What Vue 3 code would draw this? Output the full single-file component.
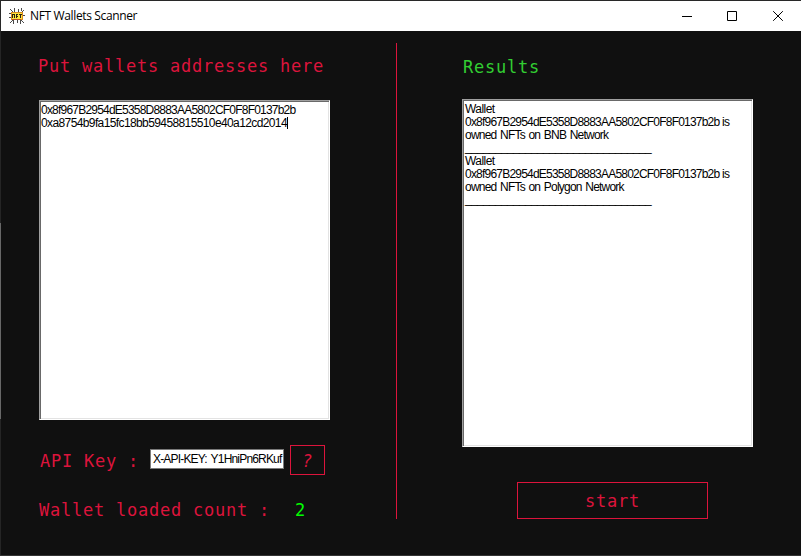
<script setup>
import { ref } from 'vue'

const wallets = ref([
  '0x8f967B2954dE5358D8883AA5802CF0F8F0137b2b',
  '0xa8754b9fa15fc18bb59458815510e40a12cd2014',
])
const separator = '_'.repeat(31)
const results = [
  { id: 1, network: 'owned NFTs on BNB Network' },
  { id: 2, network: 'owned NFTs on Polygon Network' },
]
const apiKey = 'X-API-KEY: Y1HniPn6RKuf'
</script>

<template>
  <div class="window">
    <header class="titlebar">
      <svg class="app-icon" width="16" height="16" viewBox="0 0 16 16">
        <path d="M1 1l3 3M5.500 0v4M9.500 1v3M12.500 0v3M15 2l-2 2M0 5.500h2M0 9.500h2M14 7.500h2M1 15l3-3M4.500 16v-4M8.500 15v-3M11.500 16v-4M15 15l-3-3" fill="none" stroke="#4a4a4a" stroke-width="1" />
        <path d="M2 4h12v8H2z" fill="#d98a20" />
        <path d="M3 5h10v6H3z" fill="#ffe43b" />
        <path d="M3 6h1v4H3zM4 6h1v1H4zM5 6h1v4H5zM7 6h2v1H8v1h1v1H8v1H7zM10 6h3v1h-1v3h-1V7h-1z" fill="#2b2112" />
        <path d="M3 11h9v1H3z" fill="#b94f22" />
      </svg>
      <span class="title">NFT Wallets Scanner</span>
      <div class="controls">
        <svg width="46" height="29" viewBox="0 0 46 29"><path d="M18 14.500h10" /></svg>
        <svg width="46" height="29" viewBox="0 0 46 29"><path d="M17.500 9.500h9v9h-9z" /></svg>
        <svg width="46" height="29" viewBox="0 0 46 29"><path d="M17.200 9.200l9.600 9.600M26.800 9.200L17.200 18.800" /></svg>
      </div>
    </header>
    <main class="content">
      <div class="edge"></div>
      <section class="left">
        <h1 class="mono heading">Put wallets addresses here</h1>
        <div class="box wallets">
          <div v-for="(w, i) in wallets" :key="w" class="line" :class="i ? 'lower' : 'address'">{{ w }}<i v-if="i" class="caret"></i></div>
        </div>
        <div class="api">
          <span class="mono label">API Key :</span>
          <div class="key">{{ apiKey }}</div>
          <button class="mono help">?</button>
        </div>
        <div class="mono count"><span>Wallet loaded count :</span><b>2</b></div>
      </section>
      <div class="divider"></div>
      <section class="right">
        <h2 class="mono heading green">Results</h2>
        <div class="box results">
          <template v-for="r in results" :key="r.id">
            <div class="line word">Wallet</div>
            <div class="line"><span class="address">{{ wallets[0] }}</span> is</div>
            <div class="line network">{{ r.network }}</div>
            <div class="line rule">{{ separator }}</div>
          </template>
        </div>
        <button class="mono start">start</button>
      </section>
    </main>
  </div>
</template>

<style>
body { margin: 0; overflow: hidden; }
</style>

<style scoped>
* { box-sizing: border-box; }
.window {
  width: 801px;
  height: 556px;
  display: flex;
  flex-direction: column;
  background: #101010;
  border-top: 1px solid #282828;
  border-bottom: 1px solid #333;
}
.titlebar {
  height: 30px;
  display: flex;
  align-items: center;
  background: #fff;
  border-left: 1px solid #282828;
  padding-left: 8px;
}
.app-icon { display: block; }
.title {
  margin-left: 5px;
  font: 12px/16px "Open Sans", "Noto Sans", sans-serif;
  letter-spacing: -0.36px;
  color: #000;
}
.controls { display: flex; margin: 0 -1px 0 auto; }
.controls svg { display: block; fill: none; stroke: #000; stroke-width: 1; }
.content { flex: 1; display: flex; align-items: flex-start; }
.edge {
  width: 1px;
  height: 524px;
  background: linear-gradient(#252525 192px, #686868 192px, #686868 388px, #252525 388px);
}
.left { width: 395px; padding: 23px 0 0 38px; }
.divider { width: 1px; height: 476px; margin-top: 12px; background: #dc143c; }
.right { padding: 24px 0 0 65px; }
.mono {
  font-family: "DejaVu Sans Mono", monospace;
  font-size: 17px;
  line-height: 24px;
  font-weight: 400;
  letter-spacing: 0.765px;
  color: #dc143c;
  white-space: pre;
}
.heading { margin: 0; height: 46px; }
.heading:not(.green) { margin-left: -1px; }
.green { color: #32cd32; height: 44px; padding-left: 1px; }
.box {
  width: 291px;
  background: #fff;
  border: 1px solid;
  border-color: #a0a0a0 #fff #fff #a0a0a0;
  box-shadow: inset 1px 1px #696969, inset -1px -1px #e3e3e3;
  padding: 3px 2px 2px;
  font: 12px/13px "Liberation Sans", sans-serif;
  color: #000;
}
.wallets { height: 320px; padding-left: 1px; }
.results { height: 348px; }
.line { height: 13px; white-space: pre; letter-spacing: -0.64px; }
.word { letter-spacing: -0.55px; }
.network { letter-spacing: -0.78px; word-spacing: 1px; }
.address { letter-spacing: -0.79px; }
.lower { letter-spacing: -0.61px; }
.caret { display: inline-block; width: 1px; height: 12px; background: #000; vertical-align: -2px; }
.rule { line-height: 11px; letter-spacing: -0.674px; }
.api { display: flex; height: 30px; margin-top: 25px; }
.label { width: 111px; padding: 4px 0 0 1px; }
.key {
  width: 134px;
  height: 20px;
  margin-top: 4px;
  border: 1px solid #7a7a7a;
  background: #fff;
  padding: 2px;
  font: 12px/14px "Liberation Sans", sans-serif;
  letter-spacing: -0.82px;
  word-spacing: 1.5px;
  white-space: nowrap;
  overflow: hidden;
}
.help {
  width: 35px;
  height: 30px;
  margin-left: 6px;
  padding: 2px 0 0;
  border: 1px solid #dc143c;
  background: transparent;
  font-style: italic;
}
.count { display: flex; margin-top: 23px; }
.count b { margin-left: 25px; color: #00ff00; font-weight: 400; }
.start {
  display: block;
  width: 191px;
  height: 37px;
  margin: 35px 0 0 55px;
  padding: 1px 0 0;
  border: 1px solid #dc143c;
  background: transparent;
}
</style>
